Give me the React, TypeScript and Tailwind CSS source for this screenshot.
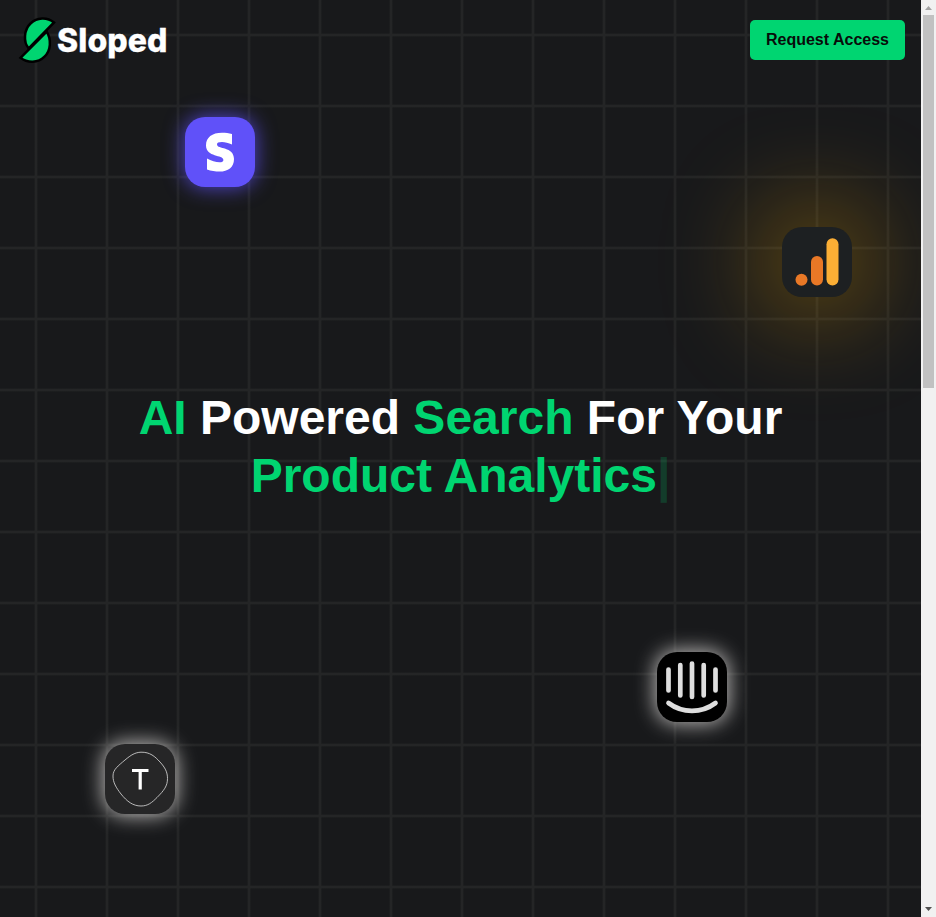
import React from "react";

function Logo() {
  return (
    <div className="flex items-center">
      <svg className="block h-[50px] w-[42px] overflow-visible" viewBox="0 0 42 50">
        <g fill="#00d571" stroke="#000" strokeWidth="2.500" strokeLinejoin="miter">
          <path d="M8.700 33.300C3 27 4 14.500 10.500 8.500C17 2.300 27 1.800 34 7.500Z" />
          <path d="M26.700 16.700C31.500 24.500 31 35.500 24.500 41.700C18 48.300 7.500 48.300 0.500 42.800Z" />
        </g>
      </svg>
      <span className="mt-[2px] -ml-[5px] font-['Inter',sans-serif] text-[32px] leading-[40px] font-extrabold tracking-[0.1px] text-white [-webkit-text-stroke:0.3px_white]">
        Sloped
      </span>
    </div>
  );
}

function StripeTile() {
  return (
    <div className="absolute top-[117px] left-[185px] size-[70px] rounded-[20px] bg-[#6051f9] shadow-[0_0_20px_1px_rgba(96,81,249,0.75)]">
      <svg className="block size-full" viewBox="0 0 70 70" fill="#fff">
        <path d="M47 17V27.500C43.500 26 40 25 37 25C33.500 25 32 25.800 32 27.400C32 32.500 49 29 49 42C49 50.500 43 54.600 34.500 54.600C30.500 54.600 26 54 22 52.500V41.500C26 43.700 31 45.300 34.500 45.300C37 45.300 38.400 44.500 38.400 42.900C38.400 37.500 21 40.500 21 28.500C21 20.500 27 15.800 37 15.800C40.500 15.800 44 16.200 47 17Z" />
      </svg>
    </div>
  );
}

function AnalyticsTile() {
  return (
    <div className="absolute top-[227px] left-[782px] size-[70px] rounded-[20px] bg-[#1d2022] shadow-[0_0_100px_20px_rgba(251,174,0,0.38)]">
      <svg className="block size-full" viewBox="0 0 70 70">
        <circle cx="19.500" cy="52.700" r="6" fill="#e97826" />
        <rect x="29" y="29" width="12" height="29.500" rx="6" fill="#e97826" />
        <rect x="44.500" y="11.300" width="12" height="47.200" rx="6" fill="#fbae35" />
      </svg>
    </div>
  );
}

function IntercomTile() {
  return (
    <div className="absolute top-[652px] left-[657px] size-[70px] rounded-[20px] bg-black shadow-[0_0_20px_2px_rgba(225,222,220,0.8)]">
      <svg className="block size-full" viewBox="0 0 70 70" fill="none" stroke="#dedede" strokeWidth="4.700" strokeLinecap="round">
        <path d="M11.500 17.500V38.500M23.300 13V43.500M35 11.500V45M46.700 13V43.500M58.500 17.500V38.500" />
        <path d="M11.500 51C25.500 61.500 44.500 61.500 58.500 51" />
      </svg>
    </div>
  );
}

function TypewiseTile() {
  return (
    <div className="absolute top-[744px] left-[105px] size-[70px] rounded-[20px] bg-[#262627] shadow-[0_0_20px_2px_rgba(225,222,220,0.8)]">
      <svg className="block size-full" viewBox="0 0 70 70" fill="none">
        <path d="M36 8.200C45 8 50 12.500 55 18C60 23.500 62.500 28 62.500 34.500C62.500 42 59 46.500 52 53.500C47 58.500 43 62 36 62C28 62 22 57.500 16 50C11 43.500 8 38.500 8 32C8 25.500 13 22 20 16C26 11 30 8.400 36 8.200Z" stroke="#c9c9c9" strokeWidth="0.9" />
        <path d="M27 26.500H43.500M35.200 26.500V45.500" stroke="#fff" strokeWidth="3.200" />
      </svg>
    </div>
  );
}

function Scrollbar() {
  return (
    <aside className="flex w-[15px] shrink-0 flex-col items-center bg-[#f1f1f1]">
      <svg className="h-[14px] w-[15px] shrink-0" viewBox="0 0 15 14">
        <path d="M4 10H11L7.500 6Z" fill="#a3a3a3" />
      </svg>
      <div className="mt-px h-[373px] w-[11px] bg-[#c1c1c1]" />
      <svg className="mt-auto h-[15px] w-[15px] shrink-0" viewBox="0 0 15 15">
        <path d="M4 5H11L7.500 9Z" fill="#505050" />
      </svg>
    </aside>
  );
}

export default function App() {
  return (
    <div className="flex h-[917px] w-[936px] overflow-hidden bg-[#18191b] font-['Liberation_Sans',Arial,sans-serif]">
      <main className="relative flex min-w-0 flex-1 flex-col overflow-hidden bg-[linear-gradient(to_right,transparent_34px,#242526_35.5px,#242526_36.500px,transparent_38px),linear-gradient(to_bottom,transparent_33px,#242526_34.500px,#242526_35.500px,transparent_37px)] bg-[length:71px_71px]">
        <StripeTile />
        <AnalyticsTile />
        <IntercomTile />
        <TypewiseTile />
        <header className="relative flex h-20 items-center justify-between pr-4 pl-5">
          <Logo />
          <button className="h-10 rounded-[5px] bg-[#00d571] px-4 text-base font-bold text-[#080d0a]">
            Request Access
          </button>
        </header>
        <h1 className="relative mt-[309px] text-center text-[48px] leading-[58px] font-bold text-white">
          <span className="text-[#00d571]">AI</span> Powered <span className="text-[#00d571]">Search</span> For Your
          <br />
          <span className="text-[#00d571]">Product Analytics</span>
          <span className="text-[#00d571]/20">|</span>
        </h1>
      </main>
      <Scrollbar />
    </div>
  );
}
